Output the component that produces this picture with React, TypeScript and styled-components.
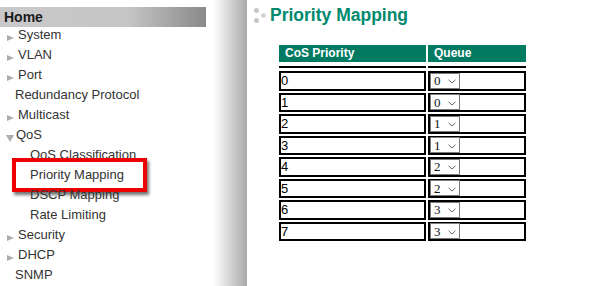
import React from 'react';
import styled, {createGlobalStyle} from 'styled-components';

const GlobalStyle = createGlobalStyle`
  html, body {
    margin: 0;
    padding: 0;
    background: #fff;
  }

  body {
    width: 605px;
    height: 286px;
    overflow: hidden;
    font-family: "Liberation Sans", Arial, sans-serif;
  }
`

type MenuEntry = {
    label: string
    level: 1 | 2
    arrow?: 'closed' | 'open'
    active?: boolean
}

const menu: MenuEntry[] = [
    {label: 'System', level: 1, arrow: 'closed'},
    {label: 'VLAN', level: 1, arrow: 'closed'},
    {label: 'Port', level: 1, arrow: 'closed'},
    {label: 'Redundancy Protocol', level: 1},
    {label: 'Multicast', level: 1, arrow: 'closed'},
    {label: 'QoS', level: 1, arrow: 'open'},
    {label: 'QoS Classification', level: 2},
    {label: 'Priority Mapping', level: 2, active: true},
    {label: 'DSCP Mapping', level: 2},
    {label: 'Rate Limiting', level: 2},
    {label: 'Security', level: 1, arrow: 'closed'},
    {label: 'DHCP', level: 1, arrow: 'closed'},
    {label: 'SNMP', level: 1},
]

const queues = [0, 0, 1, 1, 2, 2, 3, 3]

const App: React.FC = () => {
    return (
        <>
            <GlobalStyle/>
            <Page>
                <Sidebar>
                    <HomeBar>Home</HomeBar>
                    {menu.map(item => (
                        <Item key={item.label} $level={item.level} $arrow={!!item.arrow}>
                            {item.arrow === 'closed' && <ArrowRight/>}
                            {item.arrow === 'open' && <ArrowDown/>}
                            <span>{item.label}</span>
                            {item.active && <Highlight/>}
                        </Item>
                    ))}
                </Sidebar>
                <Main>
                    <TitleRow>
                        <svg width="13" height="16" viewBox="0 0 13 16">
                            <circle cx="2.5" cy="2.5" r="2.5" fill="#c6c6c6"/>
                            <circle cx="9.5" cy="7.5" r="2.3" fill="#cfcfcf"/>
                            <circle cx="2.5" cy="12.5" r="2.5" fill="#c6c6c6"/>
                        </svg>
                        <Title>Priority Mapping</Title>
                    </TitleRow>
                    <Table>
                        <thead>
                        <tr>
                            <Th $width={135}>CoS Priority</Th>
                            <Th $width={86}>Queue</Th>
                        </tr>
                        </thead>
                        <tbody>
                        <tr>
                            <Rule/>
                            <Rule/>
                        </tr>
                        {queues.map((q, i) => (
                            <tr key={i}>
                                <Td>
                                    <CellInner>{i}</CellInner>
                                </Td>
                                <Td>
                                    <CellInner>
                                        <FakeSelect>
                                            <span>{q}</span>
                                            <Chevron width="8" height="5" viewBox="0 0 8 5">
                                                <path d="M0.5 0.8 L4 4 L7.5 0.8" fill="none" stroke="#6a6a6a"
                                                      strokeWidth="1"/>
                                            </Chevron>
                                        </FakeSelect>
                                    </CellInner>
                                </Td>
                            </tr>
                        ))}
                        </tbody>
                    </Table>
                </Main>
            </Page>
        </>
    );
};

const Page = styled.div`
  display: flex;
  height: 286px;
`

const Sidebar = styled.nav`
  flex: none;
  width: 247px;
  box-sizing: border-box;
  padding-top: 7px;
  background: linear-gradient(to right, #fff 213px, #a9a9a9 100%);
`

const HomeBar = styled.div`
  width: 206px;
  height: 20px;
  box-sizing: border-box;
  padding-left: 4px;
  line-height: 20px;
  font-size: 14px;
  font-weight: bold;
  color: #1a1a1a;
  background: linear-gradient(to right, #c9c9c9 0%, #c5c5c5 62%, #8a8a8a 100%);
`

const Item = styled.div<{ $level: 1 | 2, $arrow: boolean }>`
  position: relative;
  display: flex;
  align-items: flex-start;
  height: 20px;
  padding-left: ${p => p.$level === 2 ? 30 : p.$arrow ? 6 : 15}px;
  font-size: 13px;
  line-height: 16px;
  color: #333;
  white-space: nowrap;
`

const ArrowRight = styled.i`
  width: 0;
  height: 0;
  margin: 8px 4px 0 1px;
  border-left: 7px solid #adadad;
  border-top: 3.5px solid transparent;
  border-bottom: 3.5px solid transparent;
`

const ArrowDown = styled.i`
  width: 0;
  height: 0;
  margin: 8px 2px 0 0;
  border-top: 7px solid #adadad;
  border-left: 4px solid transparent;
  border-right: 4px solid transparent;
`

const Highlight = styled.span`
  position: absolute;
  left: 12px;
  top: -9px;
  width: 135px;
  height: 34px;
  box-sizing: border-box;
  border: 4px solid #ee0000;
  box-shadow: 2px 3px 3px rgba(0, 0, 0, 0.55);
`

const Main = styled.main`
  flex: 1;
  padding-top: 5px;
`

const TitleRow = styled.div`
  display: flex;
  align-items: flex-start;
  gap: 3px;
  height: 20px;
  margin-left: 7px;

  svg {
    margin-top: 3px;
  }
`

const Title = styled.h1`
  margin: 0;
  font-size: 17.5px;
  line-height: 20px;
  font-weight: bold;
  color: #00896e;
`

const Table = styled.table`
  margin: 18px 0 0 30px;
  border-collapse: separate;
  border-spacing: 2px;
`

const Th = styled.th<{ $width: number }>`
  width: ${p => p.$width}px;
  height: 17px;
  padding: 0 6px;
  background: #017a62;
  color: #fff;
  font-size: 12px;
  line-height: 17px;
  font-weight: bold;
  text-align: left;
`

const Rule = styled.td`
  height: 2px;
  padding: 0;
  font-size: 0;
  line-height: 0;
  border-top: 2px solid transparent;
  border-bottom: 1px solid transparent;
  background: #000;
  background-clip: content-box;
`

const Td = styled.td`
  padding: 0;
  border: 2px solid #000;
  vertical-align: top;
`

const CellInner = styled.div`
  display: flex;
  align-items: center;
  height: 15.5px;
  font-size: 13px;
  line-height: 15px;
  color: #000;
`

const FakeSelect = styled.div`
  display: flex;
  align-items: center;
  width: 30px;
  height: 16px;
  box-sizing: border-box;
  padding-left: 3px;
  border: 1px solid #7a7a7a;
  background: #fff;
  font-family: "Liberation Serif", "Times New Roman", serif;
  font-size: 13px;
  color: #111;
`

const Chevron = styled.svg`
  margin: 2px 3px 0 auto;
`

export default App;
